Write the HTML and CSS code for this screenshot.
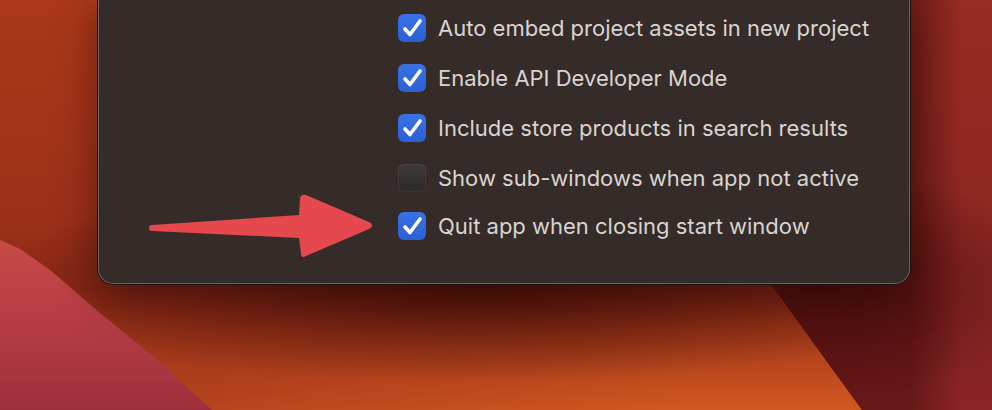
FILE: index.html
```html
<!DOCTYPE html>
<html>
<head>
<meta charset="utf-8">
<link rel="stylesheet" href="styles.css">
</head>
<body>
<div class="desktop">
  <div class="wedge-orange"></div>
  <div class="wedge-red"></div>
  <div class="wedge-pink"></div>
  <div class="window">
    <ul class="options">
      <li class="option">
        <span class="box checked"><svg viewBox="0 0 28 28"><path d="M7 15 L12 20.5 L22 7"/></svg></span>
        <span class="label">Auto embed project assets in new project</span>
      </li>
      <li class="option">
        <span class="box checked"><svg viewBox="0 0 28 28"><path d="M7 15 L12 20.5 L22 7"/></svg></span>
        <span class="label">Enable API Developer Mode</span>
      </li>
      <li class="option">
        <span class="box checked"><svg viewBox="0 0 28 28"><path d="M7 15 L12 20.5 L22 7"/></svg></span>
        <span class="label">Include store products in search results</span>
      </li>
      <li class="option">
        <span class="box"></span>
        <span class="label">Show sub-windows when app not active</span>
      </li>
      <li class="option last">
        <span class="box checked"><svg viewBox="0 0 28 28"><path d="M7 15 L12 20.5 L22 7"/></svg></span>
        <span class="label">Quit app when closing start window</span>
      </li>
    </ul>
    <svg class="arrow" viewBox="0 0 240 80" width="240" height="80">
      <path d="M9 39 C9 37 10 36 12 36 L159 26 L160 10 C160 6 163 5 166 6 L229 33 C233 35 233 38 229 40 L166 67 C163 69 161 68 161 64 L159 49 L12 42 C10 42 9 41 9 39 Z"/>
    </svg>
  </div>
</div>
</body>
</html>
```
FILE: styles.css
```css
* { box-sizing: border-box; }
html, body { margin: 0; padding: 0; }
body { width: 992px; height: 410px; overflow: hidden; font-family: Inter, "Noto Sans", "Liberation Sans", sans-serif; }

.desktop {
  position: relative;
  width: 992px;
  height: 410px;
  overflow: hidden;
  background: #a3341a;
}

.wedge-orange {
  position: absolute;
  left: 0; top: 0;
  width: 992px; height: 410px;
  clip-path: polygon(0 0, 770px 0, 770px 283px, 862px 410px, 0 410px);
  background:
    radial-gradient(ellipse 520px 100px at 480px 283px, rgba(55,10,6,0.85), rgba(55,10,6,0) 100%),
    linear-gradient(90deg, rgba(150,45,25,0.45) 20%, rgba(150,45,25,0) 70%),
    linear-gradient(180deg, #bc421b 0px, #ab381a 150px, #9b3018 250px, #952d17 290px, #b6451d 360px, #d15820 410px);
}

.wedge-red {
  position: absolute;
  left: 0; top: 0;
  width: 992px; height: 410px;
  clip-path: polygon(770px 0, 992px 0, 992px 410px, 862px 410px, 770px 283px);
  background:
    radial-gradient(ellipse 220px 120px at 820px 283px, rgba(60,10,8,0.8), rgba(60,10,8,0) 100%),
    linear-gradient(90deg, rgba(70,12,10,0.5) 910px, rgba(70,12,10,0) 960px),
    linear-gradient(180deg, #962c22 0px, #8a2623 283px, #852324 360px, #8a2426 410px);
}

.wedge-pink {
  position: absolute;
  left: 0; top: 0;
  width: 992px; height: 410px;
  clip-path: polygon(0 240px, 20px 249px, 50px 270px, 100px 313px, 160px 362px, 212px 410px, 0 410px);
  background: linear-gradient(180deg, #c84a48 240px, #b63d45 320px, #9e2f3a 410px);
}

.window {
  position: relative;
  z-index: 1;
  margin-left: 98px;
  width: 812px;
  height: 284px;
  background: #352c29;
  border: 1px solid #6a625e;
  border-top: none;
  border-radius: 0 0 15px 15px;
  box-shadow: 0 0 0 1px #1c1412, 0 12px 40px rgba(35,5,3,0.5);
  padding: 14px 0 0 299px;
}

.options {
  list-style: none;
  margin: 0;
  padding: 0;
  display: flex;
  flex-direction: column;
  gap: 22px;
}
.option {
  display: flex;
  align-items: center;
  gap: 12px;
  height: 28px;
}
.option.last { margin-top: -2px; }

.box {
  flex: none;
  width: 28px;
  height: 28px;
  border-radius: 6px;
  background: linear-gradient(180deg, #3e3a39 0%, #2b2827 100%);
  box-shadow: inset 0 0 0 1px rgba(255,255,255,0.06);
  display: flex;
}
.box.checked {
  background: linear-gradient(180deg, #3a72e6 0%, #2c5fd4 100%);
  box-shadow: none;
}
.box svg { width: 28px; height: 28px; }
.box path {
  fill: none;
  stroke: #ffffff;
  stroke-width: 3.6;
  stroke-linecap: round;
  stroke-linejoin: round;
}

.label {
  color: #d9d4d1;
  font-size: 22px;
  line-height: 28px;
  white-space: nowrap;
}

.arrow {
  position: absolute;
  left: 41px;
  top: 189px;
}
.arrow path { fill: #e5484d; }
```
